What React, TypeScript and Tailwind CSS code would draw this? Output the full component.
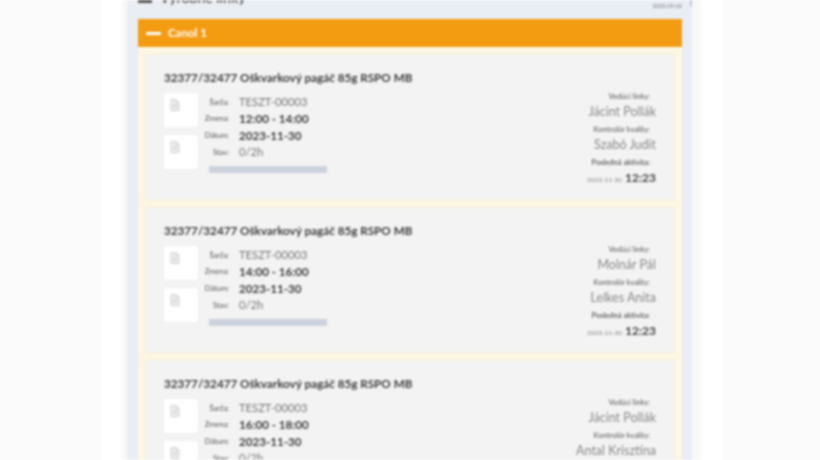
const F = "font-['Lato','Noto_Sans',sans-serif]";

function Doc() {
  return (
    <div className="w-[34px] h-[34px] bg-white rounded-[2px] flex pt-[6px] pl-[6px] shadow-[0_0_1px_rgba(0,0,0,0.08)]">
      <svg width="10" height="12" viewBox="0 0 10 12" fill="none" stroke="#cfd1d4" strokeWidth="1">
        <path d="M1 .5h5l3 3v8H1z" fill="#eeeff0" />
        <path d="M6 .5v3h3M2.5 6h5M2.5 8h5" />
      </svg>
    </div>
  );
}

function Row({ label, value, bold }: { label: string; value: string; bold?: boolean }) {
  return (
    <div className="flex items-center h-[16.7px]">
      <div className="w-[31px] text-right text-[7.5px] text-[#555]">{label}</div>
      <div className={`ml-[10px] whitespace-nowrap ${bold ? "text-[11.6px] font-bold text-[#3c3c3c]" : "text-[11.2px] text-[#777]"}`}>{value}</div>
    </div>
  );
}

function Person({ label, name }: { label: string; name: string }) {
  return (
    <>
      <div className="text-[7.5px] leading-[10px] text-[#555] pr-[6px]">{label}</div>
      <div className="text-[12.5px] leading-[19px] h-[23px] text-[#888] whitespace-nowrap">{name}</div>
    </>
  );
}

function Card({ time, lead, quality }: { time: string; lead: string; quality: string }) {
  return (
    <div className="h-[146px] shrink-0 bg-[#f3f3f3] border border-[#f0eee2] rounded-[2px] pt-[14px] pl-[18px] pr-[18px]">
      <div className="text-[11.7px] leading-[16px] font-bold text-[#3c3c3c] whitespace-nowrap">32377/32477 Oškvarkový pagáč 85g RSPO MB</div>
      <div className="flex justify-between mt-[7px]">
        <div className="flex">
          <div className="flex flex-col gap-[8px] pt-[1px]">
            <Doc />
            <Doc />
          </div>
          <div className="pt-[2px]">
            <Row label="Šarža:" value="TESZT-00003" />
            <Row label="Zmena:" value={time} bold />
            <Row label="Dátum:" value="2023-11-30" bold />
            <Row label="Stav:" value="0/2h" />
            <div className="ml-[11px] mt-[5px] w-[118px] h-[7px] bg-[#ccd2dc]" />
          </div>
        </div>
        <div className="flex flex-col items-end">
          <Person label="Vedúci linky:" name={lead} />
          <Person label="Kontrolór kvality:" name={quality} />
          <div className="text-[7.5px] leading-[10px] text-[#555] pr-[6px] font-semibold">Posledná aktivita:</div>
          <div className="flex items-baseline leading-[16px] mt-[2px] whitespace-nowrap">
            <span className="text-[6.5px] text-[#888] mr-[3px]">2023-11-30</span>
            <span className="text-[12px] font-bold text-[#444]">12:23</span>
          </div>
        </div>
      </div>
    </div>
  );
}

export default function App() {
  return (
    <div className={`${F} w-[820px] h-[460px] overflow-hidden bg-[#fbfbfb] pl-[102px] blur-[0.9px]`}>
      <div className="w-[620px] h-[470px] bg-white pl-[20px]">
        <div className="relative w-[578px] h-[470px] bg-[#f8f8f8] pl-[5px]">
          <div className="absolute left-[568px] top-0 w-[2px] h-[12px] bg-[#c4c8ce]" />
          <div className="w-[565px] h-[476px] bg-[#e9edf4] pl-[11px] -mt-[6px] flex flex-col">
            <div className="w-[544px] h-[25px] shrink-0 flex justify-between">
              <div className="flex items-start gap-[8px] text-[#555] -mt-[4px]">
                <div className="w-[14px] flex flex-col gap-[3px] mt-[5px]">
                  <div className="h-[2px] bg-[#555]" />
                  <div className="h-[3px] bg-[#555]" />
                </div>
                <span className="text-[14px] leading-[16px] font-semibold">Výrobné linky</span>
              </div>
              <span className="text-[5.5px] leading-[6px] mt-[9px] text-[#777]">2023-09-02</span>
            </div>
            <div className="w-[544px] h-[28px] shrink-0 bg-[#f39c12] flex items-center pl-[8px] text-white">
              <div className="w-[15px] h-[3px] bg-white rounded-[1px]" />
              <span className="ml-[7px] text-[11.5px] font-bold">Canol 1</span>
            </div>
            <div className="w-[544px] bg-[#fcf7e3] px-[7px] pt-[7px] flex flex-col gap-[7px]">
              <Card time="12:00 - 14:00" lead="Jácint Pollák" quality="Szabó Judit" />
              <Card time="14:00 - 16:00" lead="Molnár Pál" quality="Lelkes Anita" />
              <Card time="16:00 - 18:00" lead="Jácint Pollák" quality="Antal Krisztína" />
            </div>
          </div>
        </div>
      </div>
    </div>
  );
}
